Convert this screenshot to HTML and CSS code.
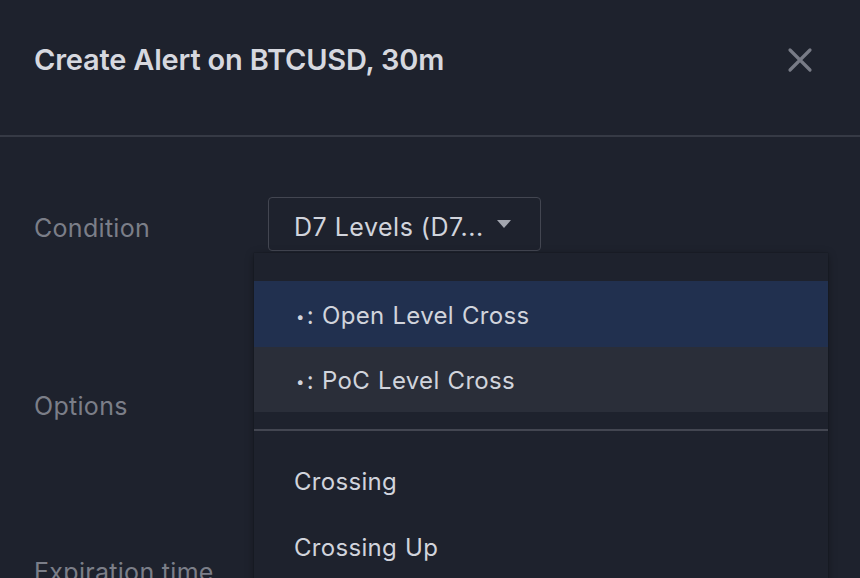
FILE: index.html
```html
<!DOCTYPE html>
<html>
<head>
<meta charset="utf-8">
<link rel="stylesheet" href="styles.css">
</head>
<body>
<div class="dialog">
  <header class="header">
    <h1 class="title">Create Alert on BTCUSD, 30m</h1>
    <button class="close" aria-label="Close">
      <svg width="26" height="26" viewBox="0 0 26 26"><path d="M3 3 L23 23 M23 3 L3 23" stroke="#787b86" stroke-width="3.2" stroke-linecap="round" fill="none"/></svg>
    </button>
  </header>
  <div class="body">
    <div class="row row-condition">
      <div class="label">Condition</div>
      <div class="select">
        <span class="select-text">D7 Levels (D7...</span>
        <svg class="caret" width="14" height="8" viewBox="0 0 14 8"><path d="M0 0 H14 L7 8 Z" fill="#a3a6af"/></svg>
      </div>
    </div>
    <div class="row row-options">
      <div class="label">Options</div>
    </div>
    <div class="row row-expiration">
      <div class="label">Expiration time</div>
    </div>
  </div>
  <div class="menu">
    <div class="item item-selected"><span class="dot">•</span>: Open Level Cross</div>
    <div class="item item-hover"><span class="dot">•</span>: PoC Level Cross</div>
    <div class="divider"></div>
    <div class="item">Crossing</div>
    <div class="item">Crossing Up</div>
  </div>
</div>
</body>
</html>
```
FILE: styles.css
```css
html, body {
  margin: 0;
  padding: 0;
  background: #1e222d;
  overflow: hidden;
  width: 860px;
  height: 578px;
}
body {
  font-family: Inter, "Noto Sans", sans-serif;
  color: #d1d4dc;
}
.dialog {
  position: relative;
  width: 860px;
  height: 578px;
}
.header {
  height: 135px;
  border-bottom: 2px solid #363a45;
  display: flex;
  align-items: center;
  justify-content: space-between;
  padding: 0 34px;
  box-sizing: content-box;
}
.title {
  margin: 0;
  font-size: 29px;
  font-weight: 600;
  color: #d6d8df;
  letter-spacing: -0.2px;
  position: relative;
  top: -8px;
}
.close {
  background: none;
  border: none;
  padding: 0;
  width: 26px;
  height: 26px;
  margin-right: 13px;
  position: relative;
  top: -8px;
  display: flex;
}
.body {
  padding: 60px 34px 0;
}
.row {
  display: flex;
  align-items: center;
}
.row-condition {
  height: 53px;
}
.row-options {
  height: 52px;
  margin-top: 130px;
}
.row-expiration {
  height: 52px;
  margin-top: 114px;
}
.label {
  width: 234px;
  font-size: 25px;
  letter-spacing: 0.3px;
  color: #7b7e88;
}
.row-condition .label {
  padding-top: 8px;
}
.select {
  box-sizing: border-box;
  width: 273px;
  height: 54px;
  border: 1px solid #434651;
  border-radius: 4px;
  display: flex;
  align-items: center;
  padding: 0 29px 0 25px;
  justify-content: space-between;
}
.select-text {
  font-size: 25px;
  letter-spacing: 0.5px;
  color: #d1d4dc;
  padding-top: 6px;
}
.menu {
  position: absolute;
  top: 253px;
  left: 254px;
  width: 574px;
  height: 340px;
  padding-top: 28px;
  box-sizing: border-box;
  background: #1e222d;
  box-shadow: 0 2px 8px rgba(0, 0, 0, 0.35), 0 0 1px rgba(0, 0, 0, 0.5);
}
.item {
  height: 66px;
  display: flex;
  align-items: center;
  padding-left: 40px;
  padding-bottom: 2px;
  font-size: 24px;
  letter-spacing: 0.3px;
  word-spacing: 1px;
  color: #d1d4dc;
  box-sizing: border-box;
  white-space: pre;
}
.dot {
  font-size: 15px;
  margin-left: 2px;
  margin-right: 2px;
  position: relative;
  top: 1px;
}
.item-selected,
.item-hover {
  padding-top: 2px;
  padding-bottom: 0;
}
.item-selected {
  background: #21304f;
}
.item-hover {
  height: 65px;
  background: #2a2e39;
}
.divider {
  height: 2px;
  background: #434651;
  margin: 17px 0 18px;
}
```
